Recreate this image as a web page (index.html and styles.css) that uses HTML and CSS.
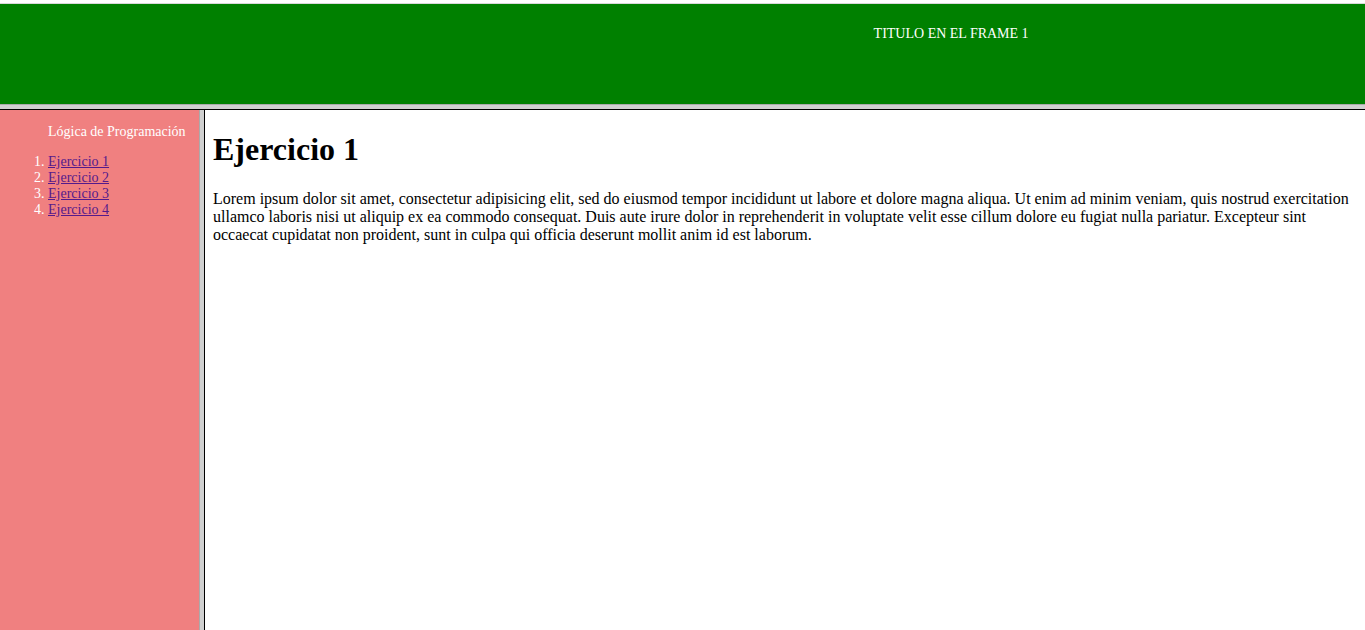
FILE: index.html
```
<!DOCTYPE html>
<html lang="es">
<head>
<meta charset="utf-8">
<title>Ejercicio 1</title>
<link rel="stylesheet" href="styles.css">
</head>
<body class="page">
<header class="banner"><p class="banner-title">TITULO EN EL FRAME 1</p></header>
<div class="splitter splitter-row"></div>
<div class="frames">
<nav class="menu">
<p class="menu-title">Lógica de Programación</p>
<ol class="menu-list">
<li><a href="#ejercicio1">Ejercicio 1</a></li>
<li><a href="#ejercicio2">Ejercicio 2</a></li>
<li><a href="#ejercicio3">Ejercicio 3</a></li>
<li><a href="#ejercicio4">Ejercicio 4</a></li>
</ol>
</nav>
<div class="splitter splitter-column"></div>
<main class="content" id="ejercicio1">
<h1 class="content-title">Ejercicio 1</h1>
<p class="content-text">Lorem ipsum dolor sit amet, consectetur adipisicing elit, sed do eiusmod tempor incididunt ut labore et dolore magna aliqua. Ut enim ad minim veniam, quis nostrud exercitation ullamco laboris nisi ut aliquip ex ea commodo consequat. Duis aute irure dolor in reprehenderit in voluptate velit esse cillum dolore eu fugiat nulla pariatur. Excepteur sint occaecat cupidatat non proident, sunt in culpa qui officia deserunt mollit anim id est laborum.</p>
</main>
</div>
</body>
</html>
```
FILE: styles.css
```
* {
  box-sizing: border-box;
}

.page {
  display: flex;
  flex-direction: column;
  min-height: 100vh;
  margin: 0;
  padding-top: 3px;
  background: #fff;
  color: #000;
  font-family: "Liberation Serif", "Times New Roman", serif;
  font-size: 16px;
  line-height: 18px;
}

.banner {
  padding: 22px 0 62px;
  border-top: 1px solid #d9d9d9;
  background: #008000;
  color: #fff;
  font-size: 14px;
  line-height: 16px;
}

.banner-title {
  margin: 0;
  padding-left: 64%;
}

.splitter {
  background: #d0d0d0;
}

.splitter-row {
  height: 6px;
  border-top: 1px solid #aaa;
  border-bottom: 1px solid #000;
}

.splitter-column {
  flex: 0 0 6px;
  border-left: 1px solid #aaa;
  border-right: 1px solid #000;
}

.frames {
  display: flex;
  flex: 1;
}

.menu {
  flex: 0 0 199px;
  padding: 14px 8px;
  background: #f08080;
  color: #fff;
  font-size: 14px;
  line-height: 16px;
}

.menu-title {
  margin: 0 0 14px;
  padding-left: 40px;
}

.menu-list {
  margin: 0;
  padding-left: 40px;
}

.menu-list a {
  color: #551a8b;
}

.content {
  flex: 1;
  padding: 21px 8px;
}

.content-title {
  margin: 0 0 23px;
  font-size: 32px;
  line-height: 36px;
}

.content-text {
  margin: 0;
}
```
